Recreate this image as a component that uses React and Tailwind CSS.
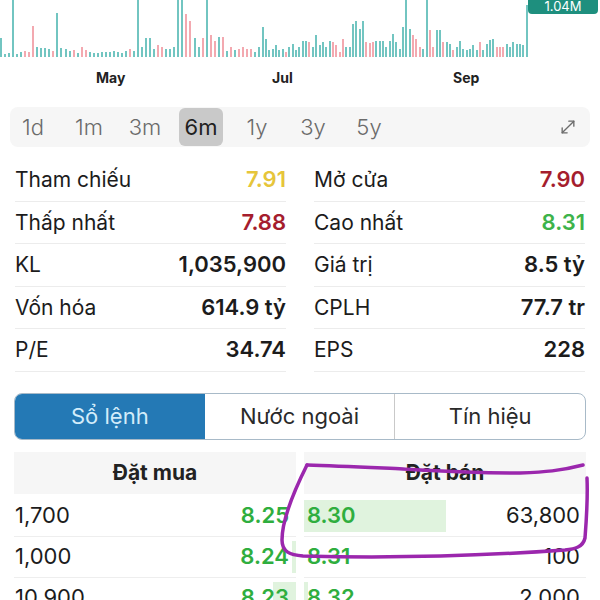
import React from 'react'
import { MoveDiagonal } from 'lucide-react'

// volume bars: [height, t = up / p = down]
const seg1 = [
  [19, 't'], [3, 't'], [4, 't'], [60, 't'], [3, 't'], [5, 't'], [6, 'p'], [5, 'p'], [31, 'p'], [10, 't'],
  [9, 't'], [9, 't'], [8, 't'], [6, 'p'], [44, 't'], [9, 't'], [8, 't'], [6, 't'], [7, 'p'], [4, 't'],
  [10, 'p'], [7, 'p'], [5, 't'], [4, 't'], [4, 't'], [5, 't'], [5, 't'], [5, 't'], [6, 't'], [5, 't'],
  [4, 't'], [6, 't'], [8, 'p'], [6, 't'], [60, 't'], [10, 't'], [19, 't'], [19, 't'], [8, 't'], [12, 'p'],
  [10, 'p'], [8, 't'], [8, 't'], [10, 't'], [60, 't'], [60, 't'], [43, 'p'], [36, 'p'], [19, 't'], [10, 't'],
  [19, 'p'], [60, 't'], [22, 'p'], [16, 'p'], [20, 't'], [20, 'p'], [6, 't'], [10, 'p'], [7, 't'], [8, 'p'],
  [10, 'p'], [8, 'p'], [8, 'p'], [5, 't'], [10, 't'], [30, 't'],
]

const seg2 = [
  [18, 't'], [7, 't'], [8, 't'], [12, 't'], [7, 't'], [8, 't'], [5, 'p'], [10, 't'], [13, 't'], [7, 't'],
  [10, 't'], [16, 't'], [16, 't'], [15, 'p'], [10, 't'], [22, 't'], [12, 't'], [15, 't'], [10, 't'], [16, 't'],
  [15, 'p'], [12, 'p'], [5, 'p'], [18, 'p'], [10, 't'], [10, 't'], [33, 't'], [36, 't'], [28, 't'], [36, 't'],
  [15, 'p'], [14, 'p'], [15, 'p'], [16, 't'], [16, 't'], [16, 't'], [10, 't'], [16, 't'], [23, 't'], [15, 't'],
  [8, 't'], [30, 't'], [60, 't'], [28, 't'], [22, 'p'], [18, 'p'], [10, 'p'], [8, 't'], [60, 't'], [27, 'p'],
  [10, 'p'], [27, 't'], [27, 't'], [15, 'p'], [15, 't'], [13, 't'], [7, 'p'], [10, 't'], [16, 't'], [8, 't'],
  [7, 't'], [8, 't'], [12, 't'], [7, 't'], [15, 'p'], [7, 't'], [13, 't'], [17, 't'], [18, 't'], [10, 'p'],
  [10, 'p'], [10, 'p'], [13, 't'], [10, 't'], [15, 't'], [13, 't'], [13, 't'], [12, 't'], [52, 't'],
]

const periods = ['1d', '1m', '3m', '6m', '1y', '3y', '5y']

const stats = [
  ['Tham chiếu', '7.91', 'text-[#e6c53a]', 'Mở cửa', '7.90', 'text-[#a51d2d]'],
  ['Thấp nhất', '7.88', 'text-[#a51d2d]', 'Cao nhất', '8.31', 'text-[#3db34a]'],
  ['KL', '1,035,900', 'text-[#1c1c1c]', 'Giá trị', '8.5 tỷ', 'text-[#1c1c1c]'],
  ['Vốn hóa', '614.9 tỷ', 'text-[#1c1c1c]', 'CPLH', '77.7 tr', 'text-[#1c1c1c]'],
  ['P/E', '34.74', 'text-[#1c1c1c]', 'EPS', '228', 'text-[#1c1c1c]'],
]

const book = [
  { qty: '1,700', bid: '8.25', bidBar: 0, ask: '8.30', askBar: 142, askQty: '63,800' },
  { qty: '1,000', bid: '8.24', bidBar: 4, ask: '8.31', askBar: 0, askQty: '100' },
  { qty: '10,900', bid: '8.23', bidBar: 23, ask: '8.32', askBar: 4, askQty: '2,000' },
]

function Bars({ data, width }) {
  return (
    <div className="flex items-end justify-between h-full" style={{ width }}>
      {data.map(([h, c], i) => (
        <div
          key={i}
          className={c === 't' ? 'w-[2px] bg-[#72c5c1]' : 'w-[2px] bg-[#f3a9b0]'}
          style={{ height: h }}
        />
      ))}
    </div>
  )
}

export default function App() {
  return (
    <div className="relative w-[600px] h-[600px] overflow-hidden bg-white text-[#1c1c1c] font-['Inter',sans-serif]">
      {/* volume chart */}
      <div className="relative h-[57px]">
        <div className="flex h-full overflow-hidden">
          <Bars data={seg1} width={265} />
          <Bars data={seg2} width={263} />
        </div>
        <div className="absolute left-[528px] top-[-3px] w-[70px] h-[17px] bg-[#1e8f7e] rounded-sm text-white text-[13px] leading-[19px] text-center">
          1.04M
        </div>
      </div>

      {/* months */}
      <div className="relative h-[40px] text-[14px] font-bold text-[#222]">
        <span className="absolute left-[96px] top-[10px]">May</span>
        <span className="absolute left-[272px] top-[10px]">Jul</span>
        <span className="absolute left-[453px] top-[10px]">Sep</span>
      </div>

      {/* period selector */}
      <div className="mx-[10px] mt-[10px] h-[40px] bg-[#f6f6f6] rounded-lg flex items-center pl-[1px] pr-[12px]">
        <div className="flex gap-[12px]">
          {periods.map((p) => (
            <div
              key={p}
              className={
                p === '6m'
                  ? 'w-[44px] h-[38px] rounded-md bg-[#c9c9c9] flex items-center justify-center text-[22px] text-[#1f1f1f]'
                  : 'w-[44px] h-[38px] flex items-center justify-center text-[22px] font-light text-[#6b6b6b]'
              }
            >
              {p}
            </div>
          ))}
        </div>
        <div className="flex-1" />
        <MoveDiagonal size={20} strokeWidth={1.6} className="text-[#6b6b6b]" />
      </div>

      {/* stats */}
      <div className="mt-[12px] px-[15px] grid grid-cols-2 gap-x-[28px]">
        {stats.map((r, i) => (
          <React.Fragment key={i}>
            <div className="h-[42.5px] flex items-center justify-between border-b border-[#ececec] text-[21px]">
              <span>{r[0]}</span>
              <span className={'text-[22px] font-semibold ' + r[2]}>{r[1]}</span>
            </div>
            <div className="h-[42.5px] flex items-center justify-between border-b border-[#ececec] text-[21px]">
              <span>{r[3]}</span>
              <span className={'text-[22px] font-semibold ' + r[5]}>{r[4]}</span>
            </div>
          </React.Fragment>
        ))}
      </div>

      {/* tabs */}
      <div className="mx-[14px] mt-[21px] h-[47px] flex border border-[#a8bac8] rounded-lg overflow-hidden text-[22px]">
        <div className="flex-1 bg-[#2479b5] text-[#d3ecfa] flex items-center justify-center">Sổ lệnh</div>
        <div className="flex-1 flex items-center justify-center border-r border-[#c9c9c9] text-[#2a2a2a]">Nước ngoài</div>
        <div className="flex-1 flex items-center justify-center text-[#2a2a2a]">Tín hiệu</div>
      </div>

      {/* order book */}
      <div className="mx-[14px] mt-[12px] grid grid-cols-2 gap-x-[8px]">
        <div className="h-[42px] bg-[#f6f6f6] flex items-center justify-center text-[21px] font-bold text-[#222]">Đặt mua</div>
        <div className="h-[42px] bg-[#f6f6f6] flex items-center justify-center text-[21px] font-bold text-[#222]">Đặt bán</div>
      </div>
      <div className="mx-[14px] mt-[2px] grid grid-cols-2 gap-x-[8px] text-[22px]">
        {book.map((r, i) => (
          <React.Fragment key={i}>
            <div className="relative h-[41px] flex items-center justify-between border-b border-[#eeeeee] pl-[1px] pr-[7px]">
              {r.bidBar > 0 && (
                <div className="absolute right-0 top-[4px] bottom-[4px] bg-[#e0f3de]" style={{ width: r.bidBar }} />
              )}
              <span className="relative">{r.qty}</span>
              <span className="relative font-semibold text-[#2fae3e]">{r.bid}</span>
            </div>
            <div className="relative h-[41px] flex items-center border-b border-[#eeeeee] pr-[6px]">
              {r.askBar > 0 && (
                <div className="absolute left-0 top-[4px] bottom-[4px] bg-[#e0f3de]" style={{ width: r.askBar }} />
              )}
              <span className="relative pl-[3px] font-semibold text-[#2fae3e]">{r.ask}</span>
              <span className="relative flex-1 text-right">{r.askQty}</span>
            </div>
          </React.Fragment>
        ))}
      </div>

      {/* hand-drawn marker annotation */}
      <svg className="absolute left-0 top-0 pointer-events-none" width="600" height="600" viewBox="0 0 600 600" fill="none">
        <path
          d="M307 465 C 340 466, 380 468, 403 469 C 440 471, 470 473, 520 473 C 545 472, 560 471, 583 465"
          stroke="#9b27ad"
          strokeWidth="3.5"
          strokeLinecap="round"
        />
        <path
          d="M587 478 C 588 500, 586 525, 585 538 C 583 547, 575 549, 565 550 C 480 556, 380 558, 303 556 C 290 555, 282 552, 282 540 C 282 520, 292 495, 307 465"
          stroke="#9b27ad"
          strokeWidth="3.5"
          strokeLinecap="round"
        />
      </svg>
    </div>
  )
}
